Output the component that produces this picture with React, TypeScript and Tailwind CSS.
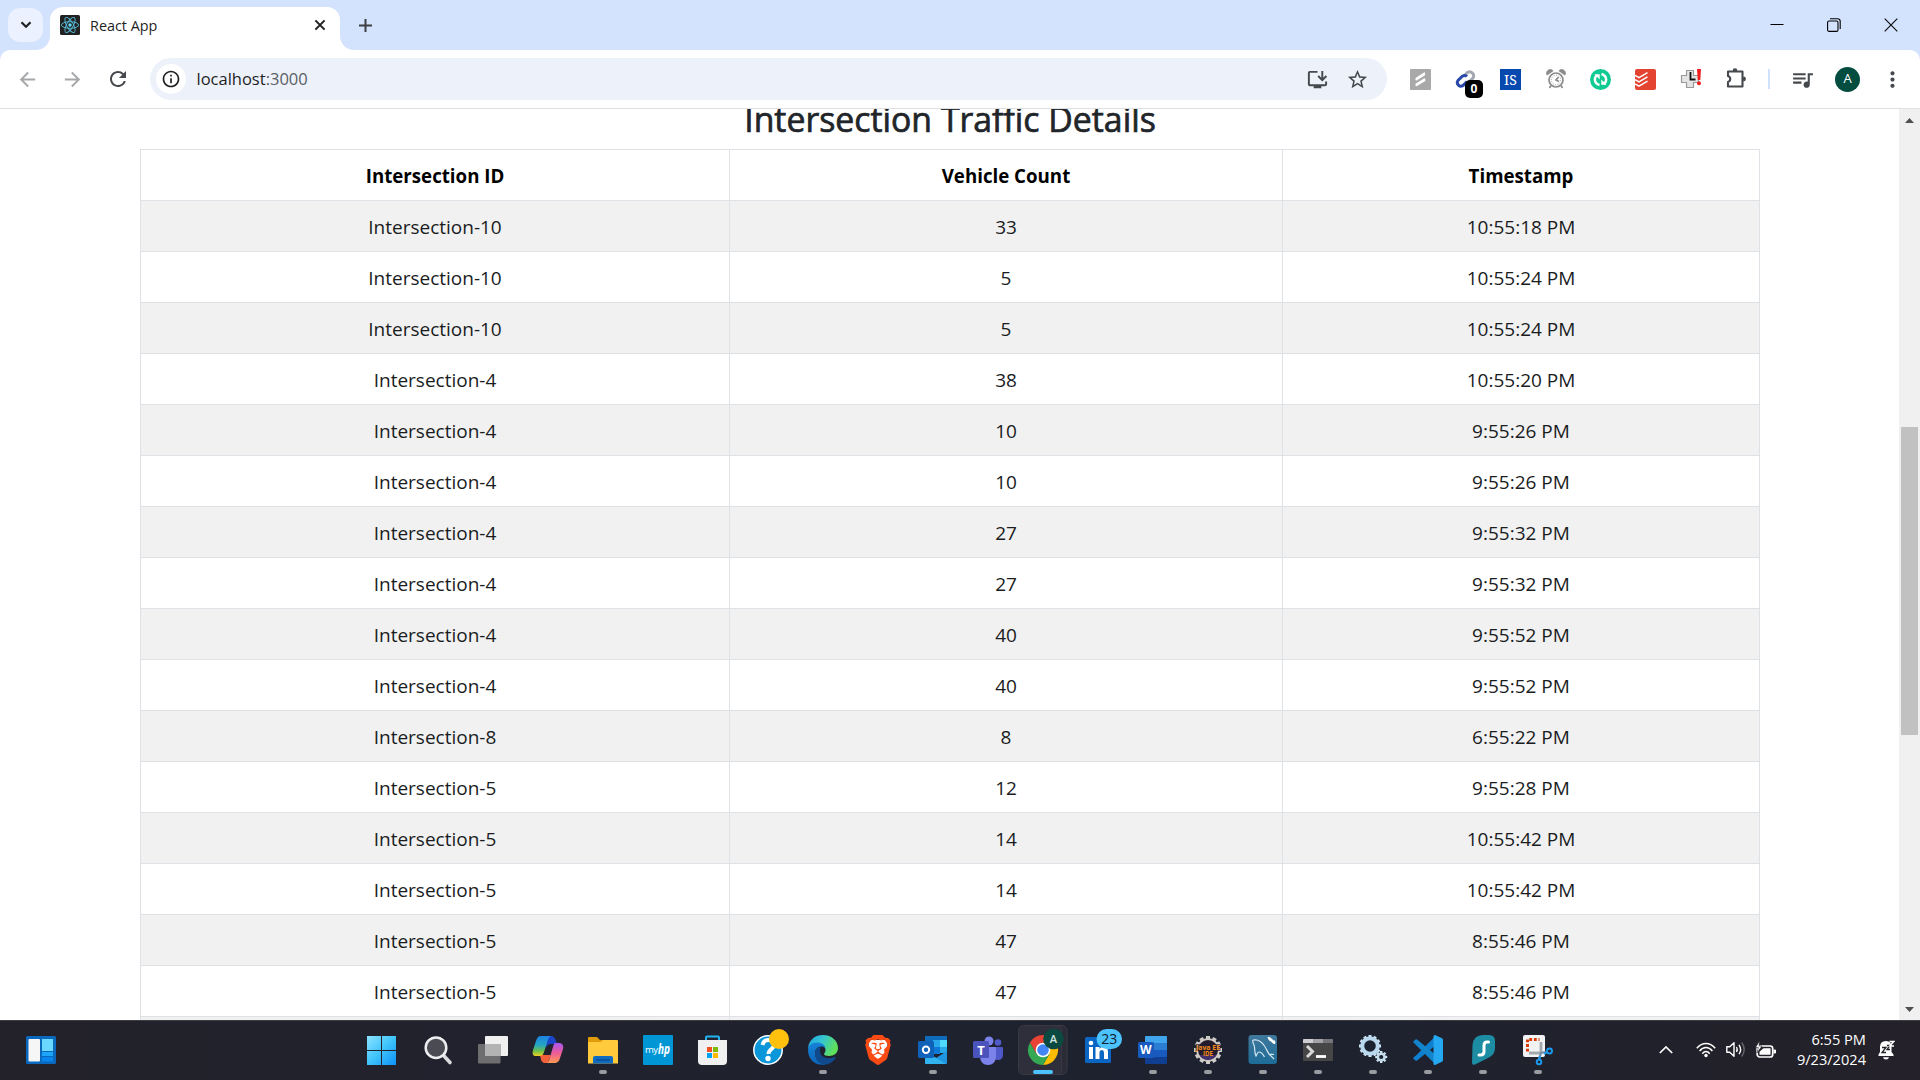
import type { ReactNode } from "react";
import {
  MdArrowBack,
  MdArrowForward,
  MdRefresh,
  MdInfoOutline,
  MdStarBorder,
  MdInstallDesktop,
  MdQueueMusic,
  MdMoreVert,
} from "react-icons/md";
import { SiBrave } from "react-icons/si";

const ROWS: [string, string, string][] = [
  ["Intersection-10", "33", "10:55:18 PM"],
  ["Intersection-10", "5", "10:55:24 PM"],
  ["Intersection-10", "5", "10:55:24 PM"],
  ["Intersection-4", "38", "10:55:20 PM"],
  ["Intersection-4", "10", "9:55:26 PM"],
  ["Intersection-4", "10", "9:55:26 PM"],
  ["Intersection-4", "27", "9:55:32 PM"],
  ["Intersection-4", "27", "9:55:32 PM"],
  ["Intersection-4", "40", "9:55:52 PM"],
  ["Intersection-4", "40", "9:55:52 PM"],
  ["Intersection-8", "8", "6:55:22 PM"],
  ["Intersection-5", "12", "9:55:28 PM"],
  ["Intersection-5", "14", "10:55:42 PM"],
  ["Intersection-5", "14", "10:55:42 PM"],
  ["Intersection-5", "47", "8:55:46 PM"],
  ["Intersection-5", "47", "8:55:46 PM"],
  ["", "", ""],
];

const FONT = "font-['Open_Sans','Noto_Sans',sans-serif]";

function TabStrip() {
  return (
    <div className="flex h-[50px] items-end bg-[#d3e2fd]">
      <div className="mb-2 ml-2 flex h-[34px] w-[35px] items-center justify-center rounded-xl bg-[#ebf1fe]">
        <svg width="12" height="8" viewBox="0 0 12 8" fill="none" stroke="#1f1f1f" strokeWidth="2.2">
          <path d="M1.5 1.2 6 5.7l4.5-4.5" />
        </svg>
      </div>
      <svg className="ml-[-8px]" width="15" height="15" viewBox="0 0 15 15">
        <path d="M15 0v15H0C9 15 15 9 15 0Z" fill="#fff" />
      </svg>
      <div className="flex h-[43px] w-[290px] items-center rounded-t-[13px] bg-white pl-2.5">
        <svg className="-mt-2" width="20" height="20" viewBox="0 0 20 20">
          <rect width="20" height="20" rx="1.5" fill="#222" />
          <g fill="none" stroke="#61dafb" strokeWidth="0.9" opacity="0.85">
            <ellipse cx="10" cy="10" rx="8.6" ry="3.3" />
            <ellipse cx="10" cy="10" rx="8.6" ry="3.3" transform="rotate(60 10 10)" />
            <ellipse cx="10" cy="10" rx="8.6" ry="3.3" transform="rotate(120 10 10)" />
          </g>
          <circle cx="10" cy="10" r="1.7" fill="#61dafb" />
        </svg>
        <span className="-mt-1.5 ml-[10px] text-[14.400px] text-[#1f1f1f]">React App</span>
        <svg className="-mt-2 mr-[14px] ml-auto" width="12" height="12" viewBox="0 0 12 12" stroke="#1f1f1f" strokeWidth="2">
          <path d="m1.4 1.4 9.2 9.2M10.600 1.400 1.400 10.600" />
        </svg>
      </div>
      <svg width="15" height="15" viewBox="0 0 15 15">
        <path d="M0 0v15h15C6 15 0 9 0 0Z" fill="#fff" />
      </svg>
      <svg className="mb-[18px] ml-1" width="13" height="13" viewBox="0 0 13 13" stroke="#3c3f43" strokeWidth="2">
        <path d="M6.500 0v13M0 6.500h13" />
      </svg>
      <div className="mr-[22px] mb-[18px] ml-auto flex items-center gap-[43px]">
        <svg width="14" height="14" viewBox="0 0 14 14" stroke="#000" strokeWidth="1">
          <path d="M0.500 6.500h13" />
        </svg>
        <svg width="14" height="14" viewBox="0 0 14 14" fill="none" stroke="#000" strokeWidth="1.1">
          <rect x="0.600" y="3" width="10.400" height="10.400" rx="1.500" />
          <path d="M3 0.800h7.500a2.700 2.700 0 0 1 2.700 2.700v7.500" />
        </svg>
        <svg width="14" height="14" viewBox="0 0 14 14" stroke="#111" strokeWidth="1.2">
          <path d="m0.700 0.700 12.600 12.600M13.300 0.700.700 13.300" />
        </svg>
      </div>
    </div>
  );
}

function Extension({ children }: { children: ReactNode }) {
  return <div className="flex h-[42px] w-[45px] items-center justify-center">{children}</div>;
}

function Extensions() {
  return (
    <div className="ml-[11px] flex items-center">
      <Extension>
        <svg width="21" height="21" viewBox="0 0 21 21">
          <rect width="21" height="21" rx="1" fill="#a9a9a9" />
          <path d="m5.500 9 8.500-5.500q1-.5 1 .8v2L7 11.200q-1.500.8-1.500-.7ZM5.500 14.700 14 9.500q1.300-.7 1.300.7v1.700L7 17q-1.500.8-1.500-.7Z" fill="#fff" />
        </svg>
      </Extension>
      <Extension>
        <div className="relative h-[21px] w-[21px]">
          <svg width="21" height="21" viewBox="0 0 21 21" fill="none" strokeWidth="3">
            <path d="m9 7 3.500-3.500a4 4 0 0 1 5.500 5.500l-3 3" stroke="#a3a7b0" />
            <path d="M12 7.500a3.500 3.500 0 0 0-5 0l-4 4a3.600 3.600 0 0 0 5 5l4-4" stroke="#2a48a8" />
          </svg>
          <div className="absolute top-[11px] left-[10px] flex h-[18px] w-[18px] items-center justify-center rounded-[5px] bg-black text-[12px] font-bold text-white">
            0
          </div>
        </div>
      </Extension>
      <Extension>
        <div className="flex h-[21px] w-[21px] items-center justify-center bg-[#0849b0] font-['Noto_Serif','Liberation_Serif',serif] text-[14px] text-white">
          IS
        </div>
      </Extension>
      <Extension>
        <svg width="20" height="20" viewBox="0 0 20 20" fill="none" stroke="#8c8c8c" strokeWidth="1.700">
          <circle cx="10" cy="11" r="7" />
          <circle cx="10" cy="11" r="4.700" strokeWidth="0.800" strokeDasharray="1 1.400" />
          <path d="M12.500 8 10 11l3 1.500M5 16.500 3.500 19M15 16.500l1.500 2.500" />
          <path d="M1 6.500A3.700 3.700 0 0 1 7.500 2ZM19 6.500A3.700 3.700 0 0 0 12.500 2Z" fill="#8c8c8c" stroke="none" />
        </svg>
      </Extension>
      <Extension>
        <svg width="21" height="21" viewBox="0 0 21 21">
          <circle cx="10.500" cy="10.500" r="10.500" fill="#0fcb93" />
          <path d="M9.500 16C4.500 14.500 3.300 9.500 7 6M11.500 5c5 1.500 6.200 6.500 2.500 10" fill="none" stroke="#fff" strokeWidth="2.400" />
          <path d="M4.500 5.200h5.200v5.200ZM16.500 15.800h-5.200v-5.200Z" fill="#fff" />
        </svg>
      </Extension>
      <Extension>
        <svg width="21" height="21" viewBox="0 0 21 21">
          <rect width="21" height="21" rx="2" fill="#e44332" />
          <path d="m0 6.300 4 2.300 8.500-5M0 10.600l4 2.300 8.500-5M0 14.900l4 2.300 8.500-5" fill="none" stroke="#fff" strokeWidth="1.500" />
        </svg>
      </Extension>
      <Extension>
        <svg width="22" height="22" viewBox="0 0 22 22">
          <path d="M6.500 2.500h7v5h5v7h-5v5h-7v-5h-5v-7h5Z" fill="#e4e4e4" stroke="#999" strokeWidth="1.200" strokeLinejoin="round" />
          <path d="M10.500 4v7.500h5" fill="none" stroke="#111" strokeWidth="1.800" />
          <path d="M17 1h4l-.7 11h-2.500Z" fill="#f21d1d" />
          <circle cx="19" cy="15.200" r="2" fill="#f21d1d" />
        </svg>
      </Extension>
      <Extension>
        <svg width="22" height="22" viewBox="0 0 22 22" fill="none" stroke="#45484c" strokeWidth="2.100">
          <path d="M3 3.500h14.500v15H3v-4.600a3 3 0 0 0 0-5.800Z" strokeLinejoin="round" />
          <path d="M7.600 2.600a2.400 2.400 0 0 1 4.800 0ZM18.500 8.600a2.400 2.400 0 0 1 0 4.800Z" fill="#45484c" stroke="none" />
          <path d="M18 9.500q2 1.500 0 3M8.500 3q1.500-1.800 3 0" strokeWidth="1.500" />
        </svg>
      </Extension>
    </div>
  );
}

function Toolbar() {
  return (
    <div className="bg-[#d3e2fd]">
      <div className="flex h-[59px] items-center rounded-t-[10px] border-b border-[#dfe0e2] bg-white text-[#45484c]">
        <MdArrowBack className="ml-4 text-[#a5a7a9]" size={23} />
        <MdArrowForward className="ml-[22px] text-[#a5a7a9]" size={23} />
        <MdRefresh className="ml-[22px]" size={24} />
        <div className="ml-5 flex h-[42px] w-[1237px] items-center rounded-full bg-[#ecf1fa]">
          <div className="ml-1.5 flex h-[30px] w-[30px] items-center justify-center rounded-full bg-white">
            <MdInfoOutline size={20} className="text-[#1f1f1f]" />
          </div>
          <span className="ml-[10.500px] pt-px text-[16.500px] text-[#1f1f1f]">
            localhost<span className="text-[#5b5e63]">:3000</span>
          </span>
          <MdInstallDesktop className="ml-auto" size={23} />
          <MdStarBorder className="mr-[18px] ml-[17px]" size={23} />
        </div>
        <Extensions />
        <div className="ml-2.5 h-5 w-0.5 bg-[#d0e1fd]" />
        <MdQueueMusic className="ml-[20px]" size={25} />
        <div className="ml-[20px] flex h-[25px] w-[25px] items-center justify-center rounded-full bg-[#034c40] text-[13px] text-white">
          A
        </div>
        <MdMoreVert className="ml-5" size={25} />
      </div>
    </div>
  );
}

function Scrollbar() {
  return (
    <div className="flex w-[21px] flex-col items-center bg-[#f0f0f0]">
      <svg className="mt-[9px]" width="9" height="5" viewBox="0 0 9 5">
        <path d="M4.500 0 9 5H0Z" fill="#505050" />
      </svg>
      <div className="mt-[304px] h-[308px] w-[17px] bg-[#c1c1c1]" />
      <svg className="mt-auto mb-2" width="9" height="5" viewBox="0 0 9 5">
        <path d="M4.500 5 9 0H0Z" fill="#505050" />
      </svg>
    </div>
  );
}

function TrafficPage() {
  return (
    <div className="flex h-[911px] overflow-hidden bg-white">
      <div className="flex-1 overflow-hidden">
        <h2 className="-mt-[11px] ml-[140px] flex h-[51px] w-[1620px] items-start justify-center text-[33.800px] leading-[42px] text-[#212529] [-webkit-text-stroke:0.700px_#212529]">
          Intersection Traffic Details
        </h2>
        <table className="ml-[140px] w-[1620px] table-fixed border-collapse text-center text-[19px] leading-[30px] text-[#1a1c1e]">
          <colgroup>
            <col className="w-[589px]" />
            <col className="w-[553px]" />
            <col />
          </colgroup>
          <thead>
            <tr className="h-[51px] text-[18.700px] text-black">
              <th className="border border-[#dee2e6] p-0 pt-0.5 font-bold">Intersection ID</th>
              <th className="border border-[#dee2e6] p-0 pt-0.5 font-bold">Vehicle Count</th>
              <th className="border border-[#dee2e6] p-0 pt-0.5 font-bold">Timestamp</th>
            </tr>
          </thead>
          <tbody>
            {ROWS.map((row, i) => (
              <tr key={i} className="h-[51px] odd:bg-[#f1f1f1]">
                {row.map((cell, j) => (
                  <td key={j} className="border border-[#dee2e6] p-0 pt-0.5">
                    {cell}
                  </td>
                ))}
              </tr>
            ))}
          </tbody>
        </table>
      </div>
      <Scrollbar />
    </div>
  );
}

function TaskIcon({ running, children }: { running?: boolean; children: ReactNode }) {
  return (
    <svg width="55" height="60" viewBox="0 0 55 60">
      {children}
      {running && <rect x="25" y="50" width="8" height="4" rx="2" fill="#9a9ba1" />}
    </svg>
  );
}

const GEAR_TEETH = [0, 30, 60, 90, 120, 150];
const SMALL_GEAR_TEETH = [0, 45, 90, 135];

function TaskbarIcons() {
  return (
    <div className="ml-[298px] flex">
      <TaskIcon>
        <defs>
          <linearGradient id="win" x1="0" y1="0" x2="1" y2="1">
            <stop offset="0" stopColor="#8ce3ff" />
            <stop offset="0.500" stopColor="#3fc4fb" />
            <stop offset="1" stopColor="#0d92f8" />
          </linearGradient>
        </defs>
        <path d="M13 16h14v14H13ZM28 16h14v14H28ZM13 31h14v14H13ZM28 31h14v14H28Z" fill="url(#win)" />
      </TaskIcon>
      <TaskIcon>
        <path d="m35 36 6 6.500" stroke="#dcdce0" strokeWidth="3.600" strokeLinecap="round" />
        <circle cx="27" cy="27.700" r="10.300" fill="#4b4b54" stroke="#eceef0" strokeWidth="2.500" />
      </TaskIcon>
      <TaskIcon>
        <rect x="21" y="16" width="23" height="20" rx="1" fill="#f0f0f0" />
        <rect x="14" y="24" width="22.500" height="19.500" rx="1" fill="#6e6e70" />
        <path d="M21 24h15.500v12H21Z" fill="#b3b3b3" />
      </TaskIcon>
      <TaskIcon>
        <defs>
          <linearGradient id="cpA" x1="0" y1="0" x2="0" y2="1">
            <stop offset="0" stopColor="#1a84e4" />
            <stop offset="0.450" stopColor="#25a4c4" />
            <stop offset="0.750" stopColor="#6cc04a" />
            <stop offset="1" stopColor="#f5d020" />
          </linearGradient>
          <linearGradient id="cpB" x1="0" y1="0" x2="0" y2="1">
            <stop offset="0" stopColor="#a855f0" />
            <stop offset="0.500" stopColor="#ee5c98" />
            <stop offset="1" stopColor="#ff9a50" />
          </linearGradient>
        </defs>
        <path d="M28 16h4c3 0 4 2 5 5l1 3h-6c-3 0-4 2-5 4Z" fill="#1b44c8" />
        <path d="M21 35h7l4 0-3 7c-.5 1-2 1-3 1-3 0-4-2-5-8Z" fill="#f4603a" />
        <path d="M22 16h11c-3 0-4 3-5 7l-3 9c-1 3-2 4-5 4h-3c-3 0-4-2-3-6l3-9c1-3 2-5 5-5Z" fill="url(#cpA)" />
        <path d="M37 23h3c3 0 5 2 4 6l-3 9c-1 4-3 5-6 5H26c3 0 4-2 5-6l3-10c.5-2 1-4 3-4Z" fill="url(#cpB)" />
      </TaskIcon>
      <TaskIcon running>
        <path d="M14 18q0-1 1-1h8l3 3h4v8H14Z" fill="#e09c0a" />
        <path d="M14 22h13l2-2h14q1 0 1 1v22.500H14Z" fill="#ffcb3c" />
        <path d="M19 43.500V38q0-2 2-2h16q2 0 2 2v5.500Z" fill="#0f6cc0" />
        <path d="M22 40h14" stroke="#0a4a94" strokeWidth="1.400" />
      </TaskIcon>
      <TaskIcon>
        <rect x="14" y="15" width="30" height="30" rx="1" fill="#0096d6" />
        <text x="16" y="33" fill="#fff" fontSize="9.500" textLength="13">my</text>
        <text x="29" y="34" fill="#fff" fontSize="15" fontStyle="italic" fontWeight="700" textLength="12" lengthAdjust="spacingAndGlyphs">hp</text>
      </TaskIcon>
      <TaskIcon>
        <path d="M22 22v-4.500q0-1 1-1h11q1 0 1 1V22" fill="none" stroke="#22b4f0" strokeWidth="2" />
        <path d="M14 20h29v21q0 4-4 4H18q-4 0-4-4Z" fill="#f0f0f0" />
        <path d="M23 27h5v5h-5Z" fill="#f25022" />
        <path d="M29 27h5v5h-5Z" fill="#7fba00" />
        <path d="M23 33h5v5h-5Z" fill="#00a4ef" />
        <path d="M29 33h5v5h-5Z" fill="#ffb900" />
      </TaskIcon>
      <TaskIcon>
        <circle cx="29" cy="30" r="14.200" fill="#0a96d8" stroke="#fff" strokeWidth="1.500" />
        <path d="M23.500 25q1-5 6-5t5.500 5c0 4-5.500 4-5.500 9" fill="none" stroke="#fff" strokeWidth="4" />
        <circle cx="29" cy="38.500" r="2.700" fill="#fff" />
        <circle cx="40" cy="19" r="10" fill="#ffc10e" />
      </TaskIcon>
      <TaskIcon running>
        <defs>
          <linearGradient id="edA" x1="0" y1="0" x2="1" y2="0.400">
            <stop offset="0" stopColor="#1fa0e4" />
            <stop offset="0.500" stopColor="#36c6d0" />
            <stop offset="1" stopColor="#5fe05a" />
          </linearGradient>
          <linearGradient id="edB" x1="0" y1="0" x2="0" y2="1">
            <stop offset="0" stopColor="#1583d8" />
            <stop offset="1" stopColor="#0b63b8" />
          </linearGradient>
        </defs>
        <path d="M14 30C14 21 20 15 29 15c9 0 15 6 15 13 0 5-4 8-9 8-3 0-5-1-5-2 0-.8 1.500-1.500 1.500-4 0-3-3-6.500-8-6.500-5 0-9.500 3-9.500 6.500Z" fill="url(#edA)" />
        <path d="M14 30c0-4 4-7.500 9-7.500 5 0 8 2.500 8.500 6-1-1.500-2.500-2-4-2C23 26.500 21 30 21 33c0 6 4 11 11 11.500-11 2-18-5.500-18-14.500Z" fill="url(#edB)" />
        <path d="M27 26.500c-4 1-6 4-6 7 0 6 5 11.500 11 11 4-.5 8-3.500 9.500-6.500.5-.8-.3-1.500-1-1C33 40 26 37 26 31c0-2 .5-3.500 1-4.500Z" fill="#114a8c" />
      </TaskIcon>
      <TaskIcon>
        <path d="M20 20h18l1 13-10 8-10-8Z" fill="#fff" />
        <SiBrave x="14" y="15" size={30} color="#fb4b14" />
      </TaskIcon>
      <TaskIcon running>
        <path d="M22 16h20q1 0 1 1v16H21V17q0-1 1-1Z" fill="#0f6cbd" />
        <path d="M29 20h7v7h-7Z" fill="#28a8ea" />
        <path d="M36 20h7v7h-7Z" fill="#50d9ff" />
        <path d="M29 27h7v7h-7Z" fill="#0f78d4" />
        <path d="M36 27h7v6h-7Z" fill="#28a8ea" />
        <path d="m43 31-11 7-11-7v12q0 1 1 1h20q1 0 1-1Z" fill="#1f94e0" />
        <path d="M21 31v12q0 1 1 1h20Z" fill="#35b8f1" opacity="0.850" />
        <rect x="14" y="21" width="16" height="17" rx="1.500" fill="#0f62b8" />
        <circle cx="22" cy="29.700" r="3.200" fill="none" stroke="#fff" strokeWidth="2" />
      </TaskIcon>
      <TaskIcon>
        <circle cx="39" cy="22.500" r="3.300" fill="#5059c9" />
        <path d="M34 27h9q1 0 1 1v6q0 6-5 6-4 0-5-4Z" fill="#5059c9" />
        <circle cx="30" cy="21" r="4.500" fill="#7b83eb" />
        <path d="M22 27h14q1 0 1 1v8c0 6-3.500 9-8 9s-8-3-8-9Z" fill="#7b83eb" />
        <rect x="14" y="21" width="16" height="17" rx="1.500" fill="#4b53bc" />
        <text x="22" y="34.500" fill="#fff" fontSize="13" fontWeight="700" textAnchor="middle">T</text>
      </TaskIcon>
      <TaskIcon>
        <rect x="10" y="5.500" width="43" height="49" rx="5" fill="#2a2b36" stroke="#3a3b45" />
        <rect x="4.500" y="5.500" width="43" height="49" rx="5" fill="#2e2f3a" stroke="#383943" />
        <path d="M29 30 42 22.500A15 15 0 0 1 29 45l6.500-11.200Z" fill="#fbbc04" />
        <path d="M29 30l6.500 3.800L29 45A15 15 0 0 1 16 22.500l6.500 11.300Z" fill="#34a853" />
        <path d="M16 22.500A15 15 0 0 1 42 22.500H29l-6.500 11.300Z" fill="#ea4335" />
        <circle cx="29" cy="30" r="7.300" fill="#fff" />
        <circle cx="29" cy="30" r="5.800" fill="#4285f4" />
        <circle cx="39.500" cy="19" r="10.300" fill="#0a4a40" />
        <text x="39.500" y="23" fill="#d5e6e0" fontSize="11" fontWeight="600" textAnchor="middle">A</text>
        <rect x="19" y="50" width="20" height="4" rx="2" fill="#4cc2ff" />
      </TaskIcon>
      <TaskIcon>
        <rect x="16" y="17" width="26" height="26" rx="1.500" fill="#0a66c2" />
        <path d="M20 27h4v12h-4ZM26.500 27h4v1.800q1.200-2.100 4-2.100 4.500 0 4.500 5.300v7h-4v-6.300q0-2.700-2-2.700-2.500 0-2.500 2.700V39h-4Z" fill="#fff" />
        <circle cx="22" cy="23" r="2.300" fill="#fff" />
        <rect x="27.500" y="9" width="25.500" height="20" rx="10" fill="#4cc2ff" />
        <text x="40.200" y="24" fill="#10202c" fontSize="14" textAnchor="middle">23</text>
      </TaskIcon>
      <TaskIcon running>
        <path d="M21 17q0-1 1-1h20q1 0 1 1v6H21Z" fill="#41a5ee" />
        <path d="M21 23h22v7H21Z" fill="#2b7cd3" />
        <path d="M21 30h22v7H21Z" fill="#185abd" />
        <path d="M21 37h22v6q0 1-1 1H22q-1 0-1-1Z" fill="#103f91" />
        <rect x="14" y="22" width="16" height="16" rx="1.500" fill="#185abd" />
        <text x="21.800" y="34" fill="#fff" fontSize="12" fontWeight="700" textAnchor="middle">W</text>
      </TaskIcon>
      <TaskIcon running>
        {GEAR_TEETH.map((a) => (
          <rect key={a} x="27" y="16" width="4" height="28" fill="#cfccc8" transform={`rotate(${a} 29 30)`} />
        ))}
        <circle cx="29" cy="30" r="11.800" fill="#cfccc8" />
        <circle cx="29" cy="30" r="10" fill="#241c2c" />
        <path d="M20.500 35h17a9.800 9.800 0 0 1-17 0Z" fill="#43306c" />
        <path d="M16.500 24h25v7h-25Z" fill="#241c2c" opacity="0.700" />
        <text x="29" y="29.500" fill="#f58a1a" fontSize="7.500" fontWeight="700" textAnchor="middle" textLength="24" lengthAdjust="spacingAndGlyphs">Java EE</text>
        <text x="29" y="36" fill="#f58a1a" fontSize="7" fontWeight="700" textAnchor="middle" textLength="10" lengthAdjust="spacingAndGlyphs">IDE</text>
      </TaskIcon>
      <TaskIcon running>
        <defs>
          <linearGradient id="sql" x1="0" y1="0" x2="0" y2="1">
            <stop offset="0" stopColor="#40789c" />
            <stop offset="1" stopColor="#1d6c98" />
          </linearGradient>
        </defs>
        <rect x="14.500" y="15" width="28.500" height="29" rx="3" fill="url(#sql)" />
        <path d="M19 20c5-1 9 2 11.500 6 2 3 3 6 4.500 8l5 5M19 20c-1 2 1 4 1.500 7 .5 4 0 6 1.500 9 1-2 1.500-4 3-4 2 0 4 2 5.500 5M35 34l5 .5" fill="none" stroke="#d5e6f0" strokeWidth="1.200" />
        <path d="m35.500 18.500 4.500 4" stroke="#fff" strokeWidth="2.600" strokeLinecap="round" />
        <path d="m34 17 2.500 4M40.500 20.500v3.500" stroke="#fff" strokeWidth="1.300" />
      </TaskIcon>
      <TaskIcon running>
        <rect x="14" y="19" width="30" height="22" rx="1" fill="#464646" />
        <path d="M14 23v-3q0-1 1-1h9v4Z" fill="#d0cdd2" />
        <path d="M24 19h10v4H24Z" fill="#a4a2a6" />
        <path d="M34 19h9q1 0 1 1v3H34Z" fill="#77757a" />
        <path d="m18 26 5.500 5.500L18 37" fill="none" stroke="#d8d8d8" strokeWidth="3" />
        <path d="M27 36.500h10" stroke="#fff" strokeWidth="2.800" />
      </TaskIcon>
      <TaskIcon running>
        {GEAR_TEETH.map((a) => (
          <rect key={a} x="24.500" y="15" width="3" height="22" fill="#cfe6f5" transform={`rotate(${a} 26 26)`} />
        ))}
        <circle cx="26" cy="26" r="7.800" fill="#1c2230" stroke="#b9d8ee" strokeWidth="4" />
        {SMALL_GEAR_TEETH.map((a) => (
          <rect key={a} x="36" y="31" width="2.400" height="12" fill="#cfe6f5" transform={`rotate(${a} 37.200 37)`} />
        ))}
        <circle cx="37.200" cy="37" r="3.300" fill="#1c2230" stroke="#c4dcec" strokeWidth="2.400" />
      </TaskIcon>
      <TaskIcon running>
        <path d="m14.500 37.500 3-2.500L37 15.500V25L18 40.500q-1 .5-1.500 0l-2-1.700q-.8-.6 0-1.300Z" fill="#0f7fd0" />
        <path d="M14.500 22.500q-.8-.7 0-1.300l2-1.700q.7-.5 1.500 0L37 35v10L17 25Z" fill="#1284cc" />
        <path d="m36 15 7 3.300q1 .6 1 1.700v20q0 1.200-1 1.700L36 45q-1.500 0-1.500-1.500V16.500Q34.500 15 36 15Z" fill="#25a7f2" />
      </TaskIcon>
      <TaskIcon running>
        <path d="M18.500 25Q19.500 15 29 15h6q6 0 6 6v7q0 7-7 10l-13 6.500q-3 1-3-2Z" fill="#1d8da3" />
        <path d="M34.500 22h-1.300q-3.200 0-3.200 3.500v6q0 3.500-3.500 3.500H25" fill="none" stroke="#fff" strokeWidth="3" strokeLinecap="round" />
      </TaskIcon>
      <TaskIcon running>
        <rect x="14" y="15" width="22" height="22" rx="2" fill="#f2f3f5" />
        <path d="M18.500 31.500v-12h12" fill="none" stroke="#d83b01" strokeWidth="3" strokeDasharray="2.800 1.800" />
        <path d="M32 22v11.500M20 33h12" stroke="#a4a9ae" strokeWidth="2.800" />
        <path d="m32 33-2 6M31 33l6-1" stroke="#6f8ba8" strokeWidth="2.200" />
        <circle cx="30" cy="42" r="2.300" fill="none" stroke="#1a9bf0" strokeWidth="1.900" />
        <circle cx="40.500" cy="31" r="2.500" fill="none" stroke="#1a9bf0" strokeWidth="1.900" />
        <path d="m35 34 3.500-2M30 40l1-4" stroke="#1a9bf0" strokeWidth="2" />
      </TaskIcon>
    </div>
  );
}

function Tray() {
  return (
    <div className="-mt-0.5 mr-[25px] ml-auto flex items-center text-white">
      <svg width="14" height="8" viewBox="0 0 14 8" fill="none" stroke="#fff" strokeWidth="1.700">
        <path d="m.8 7 6.200-6 6.200 6" />
      </svg>
      <svg className="ml-[23px]" width="20" height="16" viewBox="0 0 20 16" fill="none" stroke="#fff" strokeWidth="1.500">
        <path d="M.8 6.200Q5 1.500 10 1.500t9.200 4.700M3.600 9Q6.500 5.500 10 5.500T16.400 9M6.300 11.700Q8 9.500 10 9.500t3.700 2.200" />
        <circle cx="10" cy="13.500" r="1.700" fill="#fff" stroke="none" />
      </svg>
      <svg className="ml-2.5" width="20" height="17" viewBox="0 0 20 17" fill="none" stroke="#fff" strokeWidth="1.400">
        <path d="M.8 5.700h3L8 1.700v13.600l-4.200-4h-3Z" strokeLinejoin="round" />
        <path d="M10.500 6q1.500 2.500 0 5M13 3.800q3.200 4.700 0 9.400" />
        <path d="M15.700 1.500q5 7 0 14" stroke="#66666c" />
      </svg>
      <svg className="ml-[9px]" width="21" height="18" viewBox="0 0 21 18">
        <rect x="2.200" y="5" width="15.500" height="11" rx="2.500" fill="none" stroke="#fff" strokeWidth="1.700" />
        <path d="M4.500 13.800v-3l4-3.500h7v6.500ZM18.500 8.500H20q1 0 1 1v2q0 1-1 1h-1.500Z" fill="#fff" />
        <path d="M4.500 0 .5 6.500h2.800L2 12l5-7H4Z" fill="#fff" stroke="#23222a" strokeWidth="0.600" />
      </svg>
      <div className="-mt-px ml-[19px] w-[71px] text-right text-[14.600px] leading-[20px] whitespace-nowrap">
        <div>6:55 PM</div>
        <div>9/23/2024</div>
      </div>
      <svg className="ml-[11px]" width="18" height="20" viewBox="0 0 18 20">
        <path d="M1.500 14.500 3 12V7q0-6 6-6 5.500 0 5.500 6v5l2 2.500V16h-15ZM6 17.300h6q-.5 2.200-3 2.200t-3-2.200Z" fill="#fff" />
        <path d="M5 7.500h4L5 12.500h4M10 5.500h3L10 9.500h3" fill="none" stroke="#232229" strokeWidth="1.300" />
        <path d="M12.500 1.500h4.200l-4 4.500H17" fill="none" stroke="#fff" strokeWidth="1.500" />
      </svg>
    </div>
  );
}

function Taskbar() {
  return (
    <div className="flex h-[60px] items-center border-t border-[#3b3d42] bg-linear-to-r from-[#23222b] via-[#1d2230] via-65% to-[#242129]">
      <svg className="-mt-px ml-[26px]" width="30" height="28" viewBox="0 0 30 28">
        <rect width="30" height="28" rx="1.500" fill="#0a68bd" />
        <rect x="2.500" y="3" width="11.500" height="22.500" rx="1" fill="#f6f6f6" />
        <path d="M16 3h11v12H16Z" fill="#6ad8ff" />
        <path d="M16 16h11v4H16Z" fill="#1ea4f8" />
        <path d="M16 21h11v4.500H16Z" fill="#0785ec" />
      </svg>
      <div className="-mt-px flex">
        <TaskbarIcons />
      </div>
      <Tray />
    </div>
  );
}

export default function App() {
  return (
    <div className={`flex h-[1080px] w-[1920px] flex-col overflow-hidden ${FONT}`}>
      <TabStrip />
      <Toolbar />
      <TrafficPage />
      <Taskbar />
    </div>
  );
}
